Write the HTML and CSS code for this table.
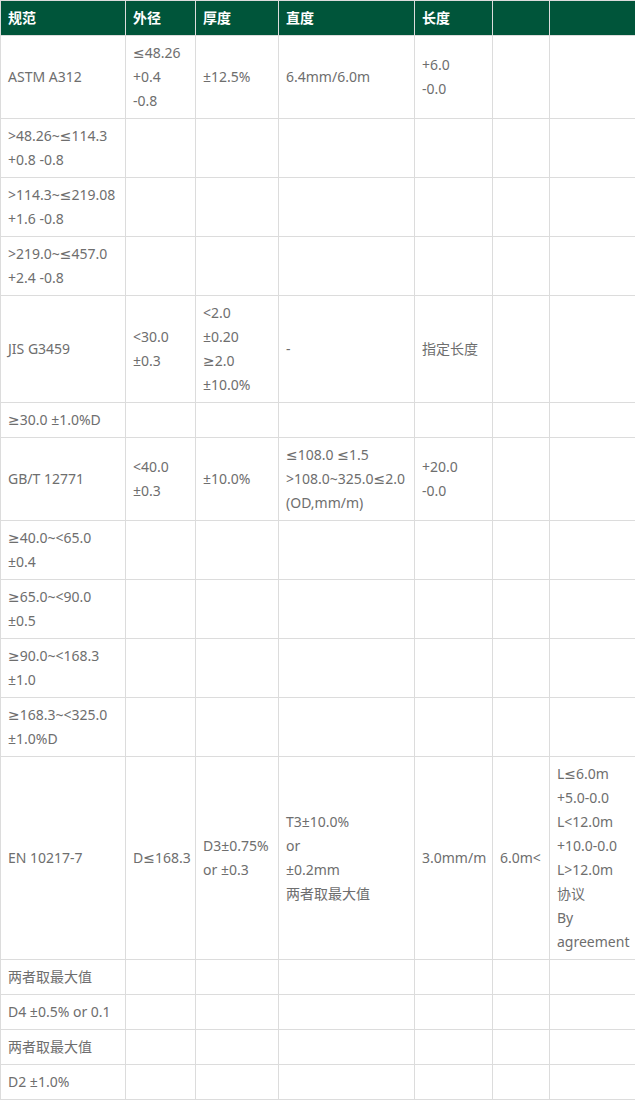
FILE: index.html
```html
<!DOCTYPE html>
<html lang="zh-CN">
<head>
<meta charset="utf-8">
<title>规范</title>
<link rel="stylesheet" href="styles.css">
</head>
<body>
<table class="spec">
  <colgroup>
    <col class="c1"><col class="c2"><col class="c3"><col class="c4"><col class="c5"><col class="c6"><col class="c7">
  </colgroup>
  <thead>
    <tr><th>规范</th><th>外径</th><th>厚度</th><th>直度</th><th>长度</th><th></th><th></th></tr>
  </thead>
  <tbody>
    <tr><td>ASTM A312</td><td>≤48.26<br>+0.4<br>-0.8</td><td>±12.5%</td><td>6.4mm/6.0m</td><td>+6.0<br>-0.0</td><td></td><td></td></tr>
    <tr><td>&gt;48.26~≤114.3<br>+0.8 -0.8</td><td></td><td></td><td></td><td></td><td></td><td></td></tr>
    <tr><td>&gt;114.3~≤219.08<br>+1.6 -0.8</td><td></td><td></td><td></td><td></td><td></td><td></td></tr>
    <tr><td>&gt;219.0~≤457.0<br>+2.4 -0.8</td><td></td><td></td><td></td><td></td><td></td><td></td></tr>
    <tr><td>JIS G3459</td><td>&lt;30.0<br>±0.3</td><td>&lt;2.0<br>±0.20<br>≥2.0<br>±10.0%</td><td>-</td><td>指定长度</td><td></td><td></td></tr>
    <tr><td>≥30.0 ±1.0%D</td><td></td><td></td><td></td><td></td><td></td><td></td></tr>
    <tr><td>GB/T 12771</td><td>&lt;40.0<br>±0.3</td><td>±10.0%</td><td>≤108.0 ≤1.5<br>&gt;108.0~325.0≤2.0<br>(OD,mm/m)</td><td>+20.0<br>-0.0</td><td></td><td></td></tr>
    <tr><td>≥40.0~&lt;65.0<br>±0.4</td><td></td><td></td><td></td><td></td><td></td><td></td></tr>
    <tr><td>≥65.0~&lt;90.0<br>±0.5</td><td></td><td></td><td></td><td></td><td></td><td></td></tr>
    <tr><td>≥90.0~&lt;168.3<br>±1.0</td><td></td><td></td><td></td><td></td><td></td><td></td></tr>
    <tr><td>≥168.3~&lt;325.0<br>±1.0%D</td><td></td><td></td><td></td><td></td><td></td><td></td></tr>
    <tr><td>EN 10217-7</td><td>D≤168.3</td><td>D3±0.75%<br>or ±0.3</td><td>T3±10.0%<br>or<br>±0.2mm<br>两者取最大值</td><td>3.0mm/m</td><td>6.0m&lt;</td><td>L≤6.0m<br>+5.0-0.0<br>L&lt;12.0m<br>+10.0-0.0<br>L&gt;12.0m<br>协议<br>By<br>agreement</td></tr>
    <tr><td>两者取最大值</td><td></td><td></td><td></td><td></td><td></td><td></td></tr>
    <tr><td>D4 ±0.5% or 0.1</td><td></td><td></td><td></td><td></td><td></td><td></td></tr>
    <tr><td>两者取最大值</td><td></td><td></td><td></td><td></td><td></td><td></td></tr>
    <tr><td>D2 ±1.0%</td><td></td><td></td><td></td><td></td><td></td><td></td></tr>
  </tbody>
</table>
</body>
</html>
```
FILE: styles.css
```css
html, body {
  margin: 0;
  padding: 0;
  background: #ffffff;
}
body {
  font-family: "Noto Sans", "DejaVu Sans", "Noto Sans CJK SC", sans-serif;
  font-size: 14px;
  color: #6e6e6e;
}
.spec {
  border-collapse: collapse;
  table-layout: fixed;
  width: 635px;
}
.c1 { width: 125px; }
.c2 { width: 70px; }
.c3 { width: 83px; }
.c4 { width: 136px; }
.c5 { width: 78px; }
.c6 { width: 57px; }
.c7 { width: 86px; }
.spec th,
.spec td {
  border: 1px solid #dcdcdc;
  padding: 5px 7px;
  line-height: 24px;
  text-align: left;
  vertical-align: middle;
  white-space: nowrap;
  overflow: hidden;
}
.spec th {
  background: #00553a;
  color: #ffffff;
  font-weight: bold;
}
```
